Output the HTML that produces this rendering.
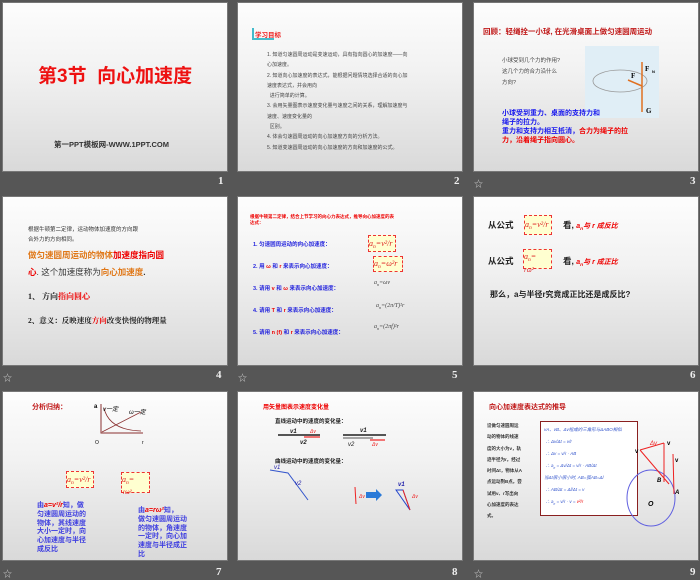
<!DOCTYPE html>
<html><head><meta charset="utf-8"><style>
body{margin:0;width:700px;height:578px;background:#565656;position:relative;overflow:hidden;font-family:"Liberation Sans","Noto Sans CJK SC",sans-serif}
.s{position:absolute;width:224px;height:168px;background:linear-gradient(#fdfdfd,#f2f2f2 40%,#d9d9d9);overflow:hidden;box-shadow:0 0 0 1px #777}
.a{position:absolute;white-space:nowrap}
.n{position:absolute;color:#eee;font-size:11px;font-weight:bold;font-family:"Liberation Serif",serif}
.st{position:absolute;color:#ccc;font-size:9px}
.box{position:absolute;border:1px dashed #e33;background:#ffffd0;font-family:"Liberation Serif",serif;font-style:italic;color:#d22;font-size:8px}
sub{font-size:70%;vertical-align:0;position:relative;top:2px;line-height:0}
.r{color:#e00}.b{color:#22d}.o{color:#e07818}
</style></head><body>
<!-- slide 1 -->
<div class="s" style="left:3px;top:3px">
<div class="a" style="left:35px;top:58px;font-size:19px;font-weight:bold;color:#ee1111">第3节&nbsp; 向心加速度</div>
<div class="a" style="left:51px;top:136px;font-size:7.5px;font-weight:bold;color:#333">第一PPT模板网-WWW.1PPT.COM</div>
</div>
<div class="n" style="left:218px;top:175px">1</div>
<!-- slide 2 -->
<div class="s" style="left:238px;top:3px">
<div class="a" style="left:14px;top:25px;width:20px;height:10px;border-left:2px solid #4bc;border-bottom:2px solid #4bc"></div>
<div class="a" style="left:17px;top:26px;font-size:6.5px;font-weight:bold;color:#e22">学习目标</div>
<div class="a" style="left:29px;top:47px;font-size:5px;line-height:10.3px;color:#444">1. 知道匀速圆周运动是变速运动，具有指向圆心的加速度——向<br>心加速度。<br>2. 知道向心加速度的表达式，能根据问题情境选择合适的向心加<br>速度表达式，并会用向<br>&nbsp;&nbsp;进行简单的计算。<br>3. 会用矢量图表示速度变化量与速度之间的关系，理解加速度与<br>速度、速度变化量的<br>&nbsp;&nbsp;区别。<br>4. 体会匀速圆周运动的向心加速度方向的分析方法。<br>5. 知道变速圆周运动的向心加速度的方向和加速度的公式。</div>
</div>
<div class="n" style="left:454px;top:175px">2</div>
<!-- slide 3 -->
<div class="s" style="left:474px;top:3px">
<div class="a" style="left:9px;top:23px;font-size:7.5px;font-weight:bold;color:#c01818">回顾：轻绳拴一小球, 在光滑桌面上做匀速圆周运动</div>
<div class="a" style="left:28px;top:53px;font-size:5.5px;line-height:11px;color:#444">小球受到几个力的作用?<br>这几个力的合力沿什么<br>方向?</div>
<div class="a" style="left:111px;top:43px;width:74px;height:72px;background:#e0eef6"></div>
<svg class="a" style="left:111px;top:43px" width="74" height="72"><ellipse cx="35" cy="35" rx="27" ry="11" fill="none" stroke="#999" stroke-width="0.8"/><line x1="57" y1="40" x2="57" y2="16" stroke="#e07020" stroke-width="1.5"/><line x1="57" y1="40" x2="57" y2="66" stroke="#e07020" stroke-width="1.5"/><line x1="57" y1="40" x2="43" y2="34" stroke="#e07020" stroke-width="1.5"/><text x="60" y="25" font-size="7" font-weight="bold" font-family="Liberation Serif">F</text><text x="67" y="27" font-size="4" font-weight="bold">N</text><text x="46" y="32" font-size="7" font-weight="bold" font-family="Liberation Serif">F</text><text x="61" y="67" font-size="7" font-weight="bold" font-family="Liberation Serif">G</text></svg>
<div class="a" style="left:28px;top:106px;font-size:7px;line-height:9px;font-weight:bold;color:#1818ee">小球受到重力、桌面的支持力和<br>绳子的拉力。<br>重力和支持力相互抵消，<span class="r">合力为绳子的拉</span><br><span class="r">力，沿着绳子指向圆心。</span></div>
</div>
<div class="n" style="left:690px;top:175px">3</div>
<div class="st" style="left:474px;top:177px">☆</div>
<!-- slide 4 -->
<div class="s" style="left:3px;top:197px">
<div class="a" style="left:25px;top:28px;font-size:5.5px;line-height:10px;color:#333">根据牛顿第二定律，运动物体加速度的方向跟<br>合外力的方向相同。</div>
<div class="a" style="left:25px;top:50px;font-size:8.5px;line-height:17px;font-weight:bold;color:#e07818">做匀速圆周运动的物体<span class="r">加速度指向圆</span><br><span class="r">心</span><span style="color:#333;font-weight:normal">. 这个加速度称为</span>向心加速度<span style="color:#333">.</span></div>
<div class="a" style="left:25px;top:94px;font-size:8px;font-weight:bold;color:#222;font-family:'Liberation Serif','Noto Serif CJK SC',serif">1、 方向<span class="r">指向圆心</span></div>
<div class="a" style="left:25px;top:118px;font-size:7.5px;font-weight:bold;color:#222;font-family:'Liberation Serif','Noto Serif CJK SC',serif">2、意义：反映速度<span class="r">方向</span>改变快慢的物理量</div>
</div>
<div class="n" style="left:216px;top:369px">4</div>
<div class="st" style="left:3px;top:371px">☆</div>
<!-- slide 5 -->
<div class="s" style="left:238px;top:197px">
<div class="a" style="left:12px;top:17px;font-size:4.5px;line-height:6px;font-weight:bold;color:#e00">根据牛顿第二定律，结合上节学习的向心力表达式，推导向心加速度的表<br>达式：</div>
<div class="a" style="left:15px;top:37px;font-size:5.5px;line-height:22px;font-weight:bold;color:#22d">1. 匀速圆周运动的向心加速度：<br>2. 用 <span class="r">ω</span> 和 <span class="r">r</span> 来表示向心加速度：<br>3. 请用 <span class="r">v</span> 和 <span class="r">ω</span> 来表示向心加速度：<br>4. 请用 <span class="r">T</span> 和 <span class="r">r</span> 来表示向心加速度：<br>5. 请用 <span class="r">n (f)</span> 和 <span class="r">r</span> 来表示向心加速度：</div>
<div class="box" style="left:130px;top:38px;width:26px;height:15px;line-height:15px">a<sub>n</sub>=v²/r</div>
<div class="box" style="left:135px;top:59px;width:28px;height:14px;line-height:14px">a<sub>n</sub>=ω²r</div>
<div class="a" style="left:136px;top:83px;font-size:6px;color:#444;font-style:italic;font-family:'Liberation Serif',serif">a<sub>n</sub>=ωv</div>
<div class="a" style="left:138px;top:106px;font-size:6px;color:#444;font-style:italic;font-family:'Liberation Serif',serif">a<sub>n</sub>=(2π/T)²r</div>
<div class="a" style="left:136px;top:127px;font-size:6px;color:#444;font-style:italic;font-family:'Liberation Serif',serif">a<sub>n</sub>=(2πf)²r</div>
</div>
<div class="n" style="left:452px;top:369px">5</div>
<div class="st" style="left:238px;top:371px">☆</div>
<!-- slide 6 -->
<div class="s" style="left:474px;top:197px">
<div class="a" style="left:14px;top:22px;font-size:8.5px;font-weight:bold;color:#222">从公式</div>
<div class="box" style="left:50px;top:18px;width:26px;height:18px;line-height:18px">a<sub>n</sub>=v²/r</div>
<div class="a" style="left:89px;top:22px;font-size:8.5px;font-weight:bold;color:#222">看, <span class="r" style="font-style:italic;font-size:7px">a<sub>n</sub>与 r 成反比</span></div>
<div class="a" style="left:14px;top:58px;font-size:8.5px;font-weight:bold;color:#222">从公式</div>
<div class="box" style="left:49px;top:52px;width:27px;height:18px;line-height:14px">a<sub>n</sub>=</div>
<div class="a" style="left:50px;top:69px;font-size:7px;color:#d22;font-style:italic;font-family:'Liberation Serif',serif">rω²</div>
<div class="a" style="left:89px;top:58px;font-size:8.5px;font-weight:bold;color:#222">看, <span class="r" style="font-style:italic;font-size:7px">a<sub>n</sub>与 r 成正比</span></div>
<div class="a" style="left:16px;top:92px;font-size:8px;font-weight:bold;color:#222">那么，a与半径r究竟成正比还是成反比?</div>
</div>
<div class="n" style="left:690px;top:369px">6</div>
<!-- slide 7 -->
<div class="s" style="left:3px;top:392px">
<div class="a" style="left:29px;top:10px;font-size:7px;font-weight:bold;color:#c01818">分析归纳：</div>
<svg class="a" style="left:90px;top:8px" width="60" height="50"><path d="M8 4V33H50" fill="none" stroke="#8a3030" stroke-width="1"/><path d="M11 8Q16 30 48 31" fill="none" stroke="#8a3030" stroke-width="0.8"/><line x1="9" y1="32" x2="48" y2="12" stroke="#8a3030" stroke-width="0.8"/><text x="1" y="8" font-size="6" font-weight="bold">a</text><text x="10" y="11" font-size="6" font-style="italic">v一定</text><text x="36" y="14" font-size="6" font-style="italic">ω一定</text><text x="2" y="44" font-size="5">O</text><text x="49" y="44" font-size="5">r</text></svg>
<div class="box" style="left:63px;top:79px;width:26px;height:15px;line-height:15px">a<sub>n</sub>=v²/r</div>
<div class="box" style="left:118px;top:80px;width:27px;height:19px;line-height:14px">a<sub>n</sub>=</div>
<div class="a" style="left:120px;top:98px;font-size:6px;color:#d22;font-style:italic">rω²</div>
<div class="a" style="left:34px;top:110px;font-size:7px;line-height:8.8px;font-weight:bold;color:#4040e0">由<span class="r" style="font-style:italic">a=v²/r</span>知，做<br>匀速圆周运动的<br>物体，其线速度<br>大小一定时，向<br>心加速度与半径<br>成反比</div>
<div class="a" style="left:135px;top:115px;font-size:7px;line-height:8.8px;font-weight:bold;color:#4040e0">由<span class="r" style="font-style:italic">a=rω²</span>知，<br>做匀速圆周运动<br>的物体，角速度<br>一定时，向心加<br>速度与半径成正<br>比</div>
</div>
<div class="n" style="left:216px;top:566px">7</div>
<div class="st" style="left:3px;top:567px">☆</div>
<!-- slide 8 -->
<div class="s" style="left:238px;top:392px">
<div class="a" style="left:25px;top:10px;font-size:6px;font-weight:bold;color:#e00">用矢量图表示速度变化量</div>
<div class="a" style="left:37px;top:25px;font-size:5.5px;font-weight:bold;color:#222">直线运动中的速度的变化量：</div>
<div class="a" style="left:37px;top:65px;font-size:5.5px;font-weight:bold;color:#222">曲线运动中的速度的变化量：</div>
<svg class="a" style="left:0;top:0" width="224" height="168"><line x1="40" y1="43" x2="82" y2="43" stroke="#555" stroke-width="2"/><line x1="66" y1="45" x2="82" y2="45" stroke="#e22" stroke-width="1.2"/><text x="52" y="41" font-size="6" font-style="italic" font-weight="bold" fill="#222">v1</text><text x="62" y="52" font-size="6" font-style="italic" font-weight="bold" fill="#222">v2</text><text x="72" y="41" font-size="5" font-style="italic" fill="#e22">Δv</text>
<line x1="105" y1="43" x2="148" y2="43" stroke="#555" stroke-width="2"/><line x1="105" y1="46" x2="135" y2="46" stroke="#555" stroke-width="1"/><line x1="132" y1="48" x2="147" y2="48" stroke="#e22" stroke-width="1.2"/><text x="122" y="40" font-size="6" font-style="italic" font-weight="bold" fill="#222">v1</text><text x="110" y="54" font-size="6" font-style="italic" fill="#222">v2</text><text x="134" y="54" font-size="5" font-style="italic" fill="#e22">Δv</text>
<path d="M32 78L50 81L70 108" fill="none" stroke="#3355cc" stroke-width="1"/><text x="36" y="77" font-size="6" font-style="italic" fill="#22a">v1</text><text x="57" y="93" font-size="6" font-style="italic" fill="#22a">v2</text>
<line x1="117" y1="95" x2="118" y2="112" stroke="#e22" stroke-width="1"/><text x="121" y="106" font-size="5" font-style="italic" fill="#e22">Δv</text><path d="M128 100h10v-3l6 6l-6 6v-3h-10z" fill="#2a7ad8"/><path d="M158 98L172 118L165 98Z" fill="none" stroke="#2244cc" stroke-width="1"/><line x1="165" y1="98" x2="172" y2="118" stroke="#e22" stroke-width="1"/><text x="160" y="94" font-size="6" font-style="italic" font-weight="bold" fill="#22a">v1</text><text x="174" y="106" font-size="5" font-style="italic" fill="#e22">Δv</text></svg>
</div>
<div class="n" style="left:452px;top:566px">8</div>
<!-- slide 9 -->
<div class="s" style="left:474px;top:392px">
<div class="a" style="left:15px;top:10px;font-size:7px;font-weight:bold;color:#c01818">向心加速度表达式的推导</div>
<div class="a" style="left:13px;top:28px;font-size:4.5px;line-height:11.3px;font-weight:bold;color:#333">设做匀速圆周运<br>动的物体的线速<br>度的大小为v，轨<br>迹半径为r。经过<br>时间Δt，物体从A<br>点运动到B点。尝<br>试用v、r写出向<br>心加速度的表达<br>式。</div>
<div class="a" style="left:66px;top:29px;width:96px;height:93px;border:1px solid #8a2020;background:#fff"></div>
<div class="a" style="left:70px;top:32px;font-size:4.5px;line-height:12px;color:#3355cc;font-style:italic">vA、vB、Δv组成的三角形与ΔABO相似<br>&nbsp;∴ Δv/Δt = v/r<br>&nbsp;∴ Δv = v/r · AB<br>&nbsp;∴ a<sub>n</sub> = Δv/Δt = v/r · AB/Δt<br>当Δt很小很小时, AB=弧AB=Δl<br>&nbsp;∴ AB/Δt = Δl/Δt = v<br>&nbsp;∴ a<sub>n</sub> = v/r · v = <span class="r">v²/r</span></div>
<svg class="a" style="left:150px;top:20px" width="74" height="140"><ellipse cx="27" cy="86" rx="24" ry="28" fill="none" stroke="#6060e0" stroke-width="1"/><line x1="50" y1="82" x2="49" y2="42" stroke="#e22" stroke-width="1"/><line x1="45" y1="72" x2="16" y2="38" stroke="#e22" stroke-width="1"/><line x1="16" y1="38" x2="40" y2="31" stroke="#e22" stroke-width="1"/><line x1="40" y1="31" x2="40" y2="70" stroke="#e22" stroke-width="1"/><text x="51" y="82" font-size="6" font-style="italic" font-weight="bold">A</text><text x="33" y="70" font-size="6" font-style="italic" font-weight="bold">B</text><text x="24" y="94" font-size="7" font-style="italic" font-weight="bold">O</text><text x="26" y="33" font-size="6" font-style="italic" fill="#e22">Δv</text><text x="43" y="33" font-size="6" font-weight="bold">v</text><text x="51" y="50" font-size="6" font-weight="bold">v</text><text x="11" y="41" font-size="6" font-weight="bold">v</text></svg>
</div>
<div class="n" style="left:690px;top:566px">9</div>
<div class="st" style="left:474px;top:567px">☆</div>
</body></html>
